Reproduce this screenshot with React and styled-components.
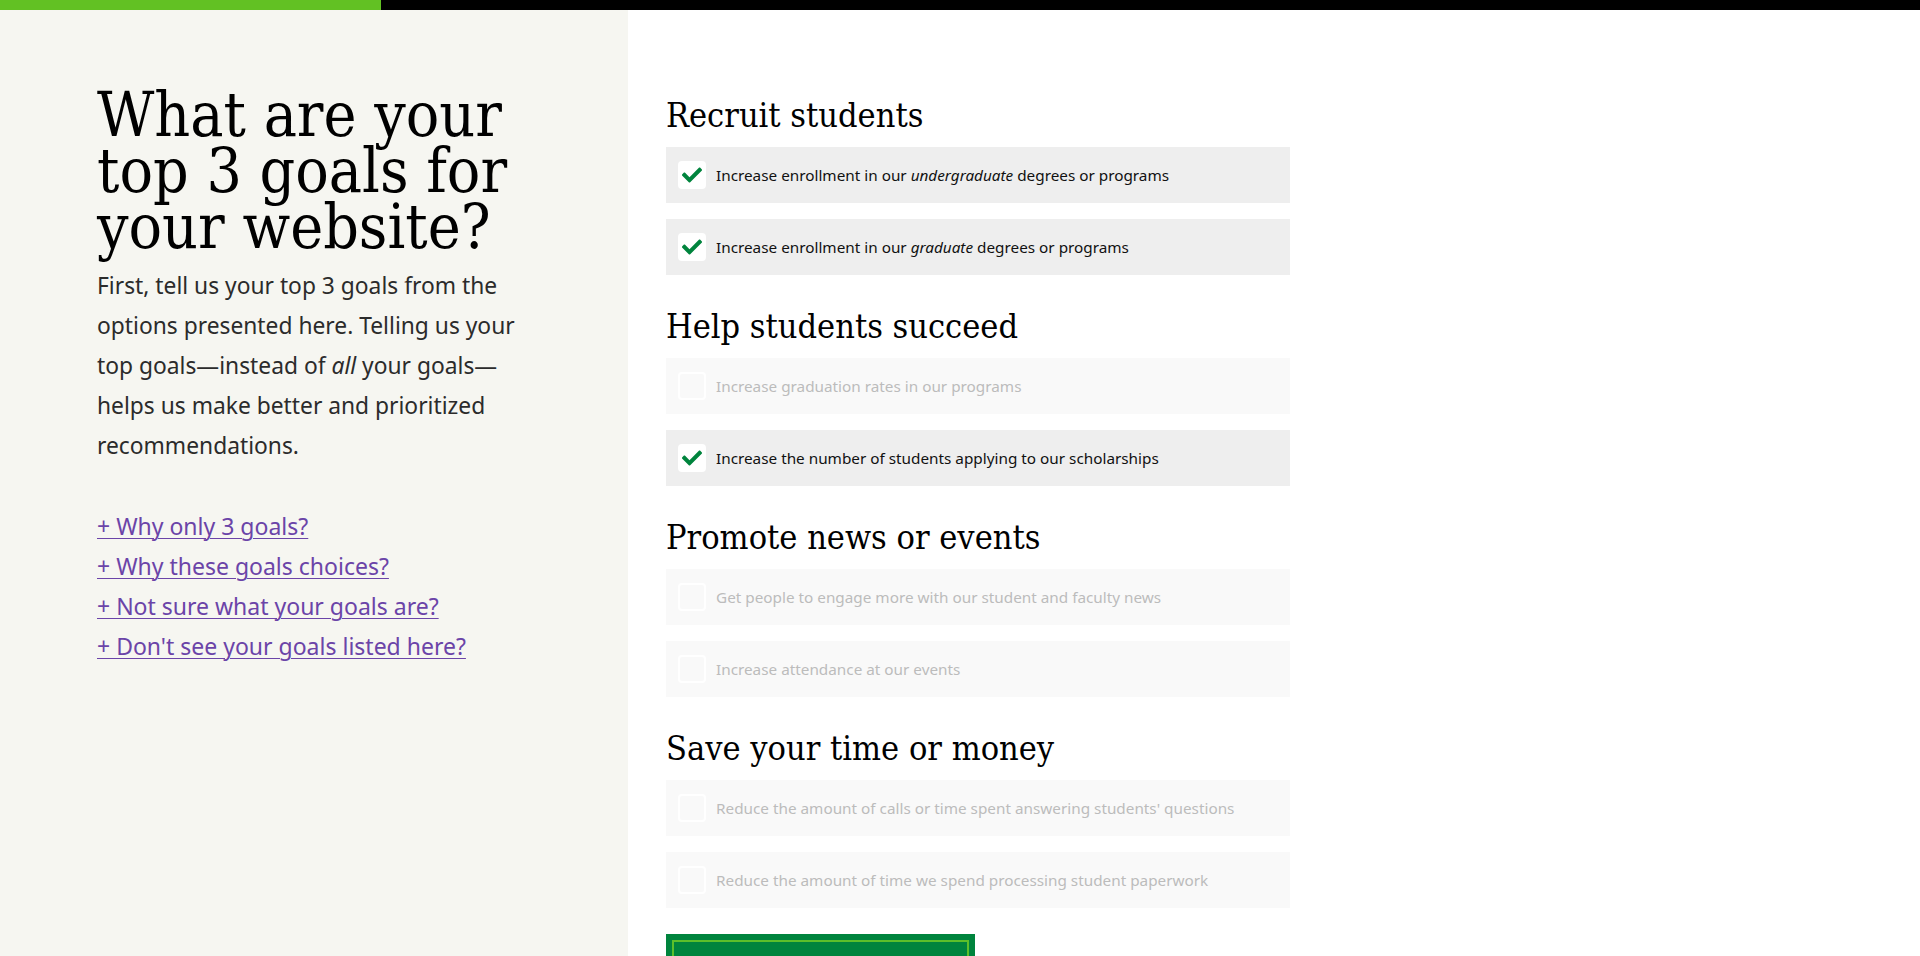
import React from 'react'
import styled, { createGlobalStyle } from 'styled-components'
import { FaCheck } from 'react-icons/fa'

const serif = `"DejaVu Serif Condensed", "DejaVu Serif", serif`
const sans = `"Noto Sans", Roboto, sans-serif`

const GlobalStyle = createGlobalStyle`
    html, body {
        margin: 0;
        padding: 0;
        background: #fff;
        overflow: hidden;
    }
    * {
        box-sizing: border-box;
    }
`

const Progress = styled.div`
    height: 10px;
    background: #000;
    div {
        width: ${(props) => props.value}px;
        height: 100%;
        background: #62c123;
    }
`

const Layout = styled.div`
    display: flex;
    min-height: calc(100vh - 10px);
`

const Aside = styled.aside`
    width: 628px;
    flex-shrink: 0;
    background: #f6f6f1;
    padding: 77px 0 0 97px;

    h1 {
        font-family: ${serif};
        font-weight: 400;
        font-size: 62px;
        line-height: 56px;
        color: #000;
        margin: 0;
        max-width: 420px;
    }

    p {
        font-family: ${sans};
        font-size: 22.8px;
        line-height: 40px;
        color: #2b2b2b;
        margin: 11px 0 0;
        max-width: 430px;
    }
`

const Links = styled.ul`
    list-style: none;
    margin: 40px 0 0;
    padding: 0;

    li {
        font-family: ${sans};
        font-size: 23px;
        line-height: 40px;
    }

    a {
        color: #6b44a8;
        text-decoration: underline;
        text-underline-offset: 3px;
        text-decoration-thickness: 1px;
    }
`

const Main = styled.main`
    padding: 83px 0 0 38px;
    width: 662px;
`

const Section = styled.section`
    margin-bottom: 29px;

    h2 {
        font-family: ${serif};
        font-weight: 400;
        font-size: 34px;
        line-height: 44px;
        color: #000;
        margin: 0 0 10px;
    }
`

const Option = styled.label`
    display: flex;
    align-items: center;
    gap: 10px;
    height: 56px;
    padding: 0 12px;
    margin-bottom: 16px;
    background: ${(props) => (props.checked ? '#eeeeee' : '#f9f9f9')};
    color: ${(props) => (props.checked ? '#111' : '#bcbcbc')};
    font-family: ${sans};
    font-size: 15.3px;
    cursor: pointer;

    em {
        font-style: italic;
    }
`

const Box = styled.span`
    width: 28px;
    height: 28px;
    flex-shrink: 0;
    border-radius: 4px;
    display: flex;
    align-items: center;
    justify-content: center;
    background: ${(props) => (props.checked ? '#fff' : 'transparent')};
    border: 2px solid #fff;
    color: #00843d;
    font-size: 20px;
`

const NextButton = styled.button`
    display: block;
    width: 309px;
    height: 72px;
    margin-top: -3px;
    background: #00843d;
    border: 0;
    padding: 6px;
    color: #fff;
    font-family: ${sans};
    font-size: 20px;

    span {
        display: block;
        height: 100%;
        border: 2px solid #5cbf2a;
        padding-top: 30px;
    }
`

const sections = [
    {
        title: 'Recruit students',
        options: [
            { checked: true, label: <>Increase enrollment in our <em>undergraduate</em> degrees or programs</> },
            { checked: true, label: <>Increase enrollment in our <em>graduate</em> degrees or programs</> },
        ],
    },
    {
        title: 'Help students succeed',
        options: [
            { checked: false, label: 'Increase graduation rates in our programs' },
            { checked: true, label: 'Increase the number of students applying to our scholarships' },
        ],
    },
    {
        title: 'Promote news or events',
        options: [
            { checked: false, label: 'Get people to engage more with our student and faculty news' },
            { checked: false, label: 'Increase attendance at our events' },
        ],
    },
    {
        title: 'Save your time or money',
        options: [
            { checked: false, label: "Reduce the amount of calls or time spent answering students' questions" },
            { checked: false, label: 'Reduce the amount of time we spend processing student paperwork' },
        ],
    },
]

const links = [
    '+ Why only 3 goals?',
    '+ Why these goals choices?',
    '+ Not sure what your goals are?',
    "+ Don't see your goals listed here?",
]

function App() {
    return (
        <>
            <GlobalStyle />
            <Progress value={381}><div /></Progress>
            <Layout>
                <Aside>
                    <h1>What are your top 3 goals for your website?</h1>
                    <p>
                        First, tell us your top 3 goals from the options presented here. Telling us your
                        top goals—instead of <em>all</em> your goals—helps us make better and prioritized
                        recommendations.
                    </p>
                    <Links>
                        {links.map((text) => (
                            <li key={text}><a href="#">{text}</a></li>
                        ))}
                    </Links>
                </Aside>
                <Main>
                    {sections.map((section) => (
                        <Section key={section.title}>
                            <h2>{section.title}</h2>
                            {section.options.map((option, i) => (
                                <Option key={i} checked={option.checked}>
                                    <Box checked={option.checked}>{option.checked && <FaCheck />}</Box>
                                    <span>{option.label}</span>
                                </Option>
                            ))}
                        </Section>
                    ))}
                    <NextButton><span>Next</span></NextButton>
                </Main>
            </Layout>
        </>
    )
}

export default App
